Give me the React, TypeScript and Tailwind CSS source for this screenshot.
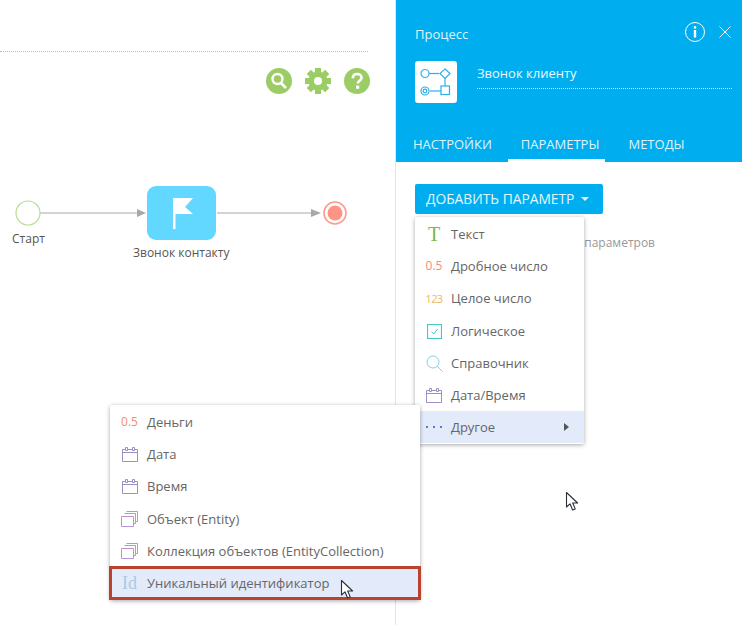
import React from "react";

const Cursor = ({ className }: { className: string }) => (
  <svg className={className} width="15" height="21" viewBox="0 0 15 21">
    <path d="M1.5 1.5V16L5 12.8L7.6 19L10.2 17.9L7.7 12H12.6Z" fill="#fff" stroke="#2a2f3a" strokeWidth="1.1" strokeLinejoin="round" />
  </svg>
);

const Calendar = () => (
  <svg width="16" height="16" viewBox="0 0 16 16" fill="none" stroke="#9a90c4" strokeWidth="1">
    <path d="M.5 3.5H15.5V15.5H.5Z M.5 6.5H15.5" />
    <path d="M3.5 1.5H5.5V4.5H3.5Z M10.5 1.5H12.5V4.5H10.5Z" fill="#fff" />
  </svg>
);

const Stack = () => (
  <svg width="17" height="16" viewBox="0 0 17 16" fill="none" stroke="#bb93d2" strokeWidth="1">
    <path d="M5.5.5H16.5V10.5H14.5" />
    <path d="M3.5 2.5H14.5V12.5H12.5" fill="#fff" />
    <path d="M.5 5.5H12.5V15.5H.5Z" fill="#fff" />
  </svg>
);

const Row = ({ icon, label, active, arrow, wide, shift }: { icon: React.ReactNode; label: string; active?: boolean; arrow?: boolean; wide?: boolean; shift?: boolean }) => (
  <div className={`flex h-[32px] items-center ${active ? "bg-[#e3eafa]" : ""} ${shift ? "mt-[1px]" : ""}`}>
    <div className={`flex shrink-0 justify-center pl-[2px] ${wide ? "w-[37px]" : "w-[36px]"}`}>{icon}</div>
    <span className="text-[13px] leading-none text-[#666]">{label}</span>
    {arrow && <span className="ml-auto mr-[15px] h-0 w-0 border-y-[4px] border-l-[5px] border-y-transparent border-l-[#555]" />}
  </div>
);

const Half = () => <span className="text-[12px] leading-none text-[#f78a74]">0.5</span>;

export default function App() {
  return (
    <div className="relative flex h-[625px] w-[742px] overflow-hidden bg-white text-[13px] text-[#666]" style={{ fontFamily: '"Open Sans", sans-serif' }}>
      {/* Canvas */}
      <div className="relative h-full w-[396px] border-r border-[#e4e4e4]">
        <div className="mt-[51px] w-[368px] border-t border-dotted border-[#bbb]" />
        <div className="mr-[25px] mt-[16px] flex justify-end gap-[13px]">
          <svg width="26" height="26" viewBox="0 0 26 26">
            <circle cx="13" cy="13" r="13" fill="#9ccc65" />
            <circle cx="11.5" cy="11" r="5" fill="none" stroke="#fff" strokeWidth="2.4" />
            <path d="M15 15L20 20" stroke="#fff" strokeWidth="2.6" />
          </svg>
          <svg width="26" height="26" viewBox="0 0 26 26">
            <g fill="#9ccc65">
              <circle cx="13" cy="13" r="9.5" />
              <rect x="10" y="0" width="6" height="26" />
              <rect x="10" y="0" width="6" height="26" transform="rotate(45 13 13)" />
              <rect x="10" y="0" width="6" height="26" transform="rotate(90 13 13)" />
              <rect x="10" y="0" width="6" height="26" transform="rotate(135 13 13)" />
            </g>
            <circle cx="13" cy="13" r="4" fill="#fff" />
          </svg>
          <svg width="26" height="26" viewBox="0 0 26 26">
            <circle cx="13" cy="13" r="13" fill="#9ccc65" />
            <path d="M8.8 10.2C8.8 7.6 10.6 6 13.2 6C15.7 6 17.5 7.5 17.5 9.7C17.5 12.6 13.7 12.8 13.7 15.6" fill="none" stroke="#fff" strokeWidth="2.6" />
            <rect x="12" y="17.6" width="3.2" height="3.2" fill="#fff" />
          </svg>
        </div>

        {/* Diagram */}
        <svg className="absolute left-0 top-[170px]" width="360" height="70" viewBox="0 0 360 70">
          <path d="M40 43H137M217 43H314" stroke="#a8a8a8" strokeWidth="1" />
          <path d="M137 39L146 43L137 47ZM311 39L321 43L311 47Z" fill="#a8a8a8" />
          <circle cx="28" cy="43" r="12" fill="#fff" stroke="#b9dc97" strokeWidth="1.2" />
          <circle cx="335" cy="43" r="11" fill="#fff" stroke="#ff9a8c" strokeWidth="1.6" />
          <circle cx="335" cy="43" r="7.5" fill="#ff9486" />
        </svg>
        <div className="absolute left-[147px] top-[186px] flex h-[54px] w-[69px] items-center justify-center rounded-[9px] bg-[#62d7ff] pl-[3px]">
          <svg width="20" height="31" viewBox="0 0 20 31">
            <path d="M0 0H20L12 9L20 16H2.5V31H0Z" fill="#fff" />
          </svg>
        </div>
        <div className="absolute left-[12px] top-[232px] text-[12px] leading-[14px] text-[#555]">Старт</div>
        <div className="absolute left-[133px] top-[246px] text-[12px] leading-[14px] text-[#555]">Звонок контакту</div>
      </div>

      {/* Panel */}
      <div className="flex-1">
        <div className="flex h-[162px] flex-col bg-[#00aeef] pt-[21px] text-white">
          <div className="flex items-center pl-[19px] pr-[11px]">
            <div className="mt-[4px] text-[13px] leading-[18px] text-[#dff4fd]">Процесс</div>
            <svg className="ml-auto" width="22" height="22" viewBox="0 0 22 22">
              <circle cx="11" cy="11" r="9.5" fill="none" stroke="#fff" strokeWidth="1" />
              <rect x="9.8" y="5.2" width="2.4" height="2.4" fill="#fff" />
              <rect x="9.8" y="9" width="2.4" height="7.5" fill="#fff" />
            </svg>
            <svg className="ml-[13px]" width="12" height="12" viewBox="0 0 12 12">
              <path d="M.5.5L11.5 11.5M11.5.5L.5 11.5" stroke="#fff" strokeWidth="1" />
            </svg>
          </div>
          <div className="mt-[18px] flex items-start gap-[20px] pl-[19px] pr-[10px]">
            <div className="flex h-[42px] w-[42px] shrink-0 items-center justify-center rounded-[3px] bg-white">
              <svg width="32" height="28" viewBox="0 0 32 28" fill="none" stroke="#2ab1ea" strokeWidth="1.2">
                <circle cx="5" cy="5.5" r="4" />
                <path d="M9 5.5H19" />
                <path d="M25 1L30 5.5L25 10.5L20 5.5Z" />
                <path d="M25 10.5V18" />
                <rect x="21" y="18" width="8.5" height="8.5" />
                <path d="M21 23H10" />
                <circle cx="5" cy="23" r="4" />
                <circle cx="5" cy="23" r="1.8" />
              </svg>
            </div>
            <div className="mt-[3px] flex-1 border-b border-dotted border-[#d8f2fc] pb-[6px] text-[13px] leading-[18px] text-[#e8f8fe]">
              Звонок клиенту
            </div>
          </div>
          <div className="mt-auto flex pl-[17px] text-[13px] leading-[19px] text-[#dff4fd]">
            <div className="pb-[8px]">НАСТРОЙКИ</div>
            <div className="ml-[16px] border-b-[3px] border-white pb-[5px] pl-[13px] pr-[6px]">ПАРАМЕТРЫ</div>
            <div className="ml-[23px] pb-[8px]">МЕТОДЫ</div>
          </div>
        </div>
        <div className="relative px-[19px] pt-[22px]">
          <div className="flex h-[30px] w-[188px] items-center rounded-[2px] bg-[#00aeef] pl-[11px] text-[13.8px] text-[#e6f7fe]">
            ДОБАВИТЬ ПАРАМЕТР
            <span className="ml-[7px] h-0 w-0 border-x-[4px] border-t-[4px] border-x-transparent border-t-[#e6f7fe]" />
          </div>
          <div className="absolute right-[87px] top-[73px] text-[12px] leading-[16px] text-[#999]">Нет параметров</div>
          <Cursor className="absolute left-[169px] top-[329px]" />
        </div>
      </div>

      {/* Main dropdown */}
      <div className="absolute left-[415px] top-[217px] w-[169px] rounded-[2px] bg-white pb-[1px] pt-[1px] shadow-[0_1px_4px_rgba(0,0,0,0.35)]">
        <Row icon={<span className="text-[20px] leading-none text-[#7ab648]" style={{ fontFamily: '"Liberation Serif", serif' }}>T</span>} label="Текст" />
        <Row icon={<Half />} label="Дробное число" />
        <Row icon={<span className="text-[11px] leading-none tracking-[-0.7px] text-[#f0b860]">123</span>} label="Целое число" />
        <Row
          shift
          icon={
            <svg width="15" height="15" viewBox="0 0 15 15" fill="none">
              <rect x=".5" y=".5" width="14" height="14" stroke="#45c8c8" strokeWidth="1.2" />
              <path d="M4.5 7.5L6.8 10L10.5 5" stroke="#45c8c8" />
            </svg>
          }
          label="Логическое"
        />
        <Row
          icon={
            <svg width="17" height="17" viewBox="0 0 17 17" fill="none" stroke="#84cdf0" strokeWidth="1">
              <circle cx="7" cy="7" r="6" />
              <path d="M11.5 11.5L16.5 16.5" />
            </svg>
          }
          label="Справочник"
        />
        <Row icon={<Calendar />} label="Дата/Время" />
        <Row
          icon={
            <span className="flex gap-[5px]">
              <i className="h-[2px] w-[2px] bg-[#5a78d8]" />
              <i className="h-[2px] w-[2px] bg-[#5a78d8]" />
              <i className="h-[2px] w-[2px] bg-[#5a78d8]" />
            </span>
          }
          label="Другое"
          active
          arrow
        />
      </div>

      {/* Sub dropdown */}
      <div className="absolute left-[110px] top-[405px] w-[310px] rounded-[2px] bg-white pb-[1px] pt-[1px] shadow-[0_1px_4px_rgba(0,0,0,0.35)]">
        <Row wide icon={<Half />} label="Деньги" />
        <Row wide icon={<Calendar />} label="Дата" />
        <Row wide icon={<Calendar />} label="Время" />
        <Row wide shift icon={<Stack />} label="Объект (Entity)" />
        <Row wide icon={<Stack />} label="Коллекция объектов (EntityCollection)" />
        <Row wide icon={<span className="text-[18px] leading-none text-[#a9cbe3]" style={{ fontFamily: '"Liberation Serif", serif' }}>Id</span>} label="Уникальный идентификатор" active />
      </div>
      <div className="absolute left-[109px] top-[566px] h-[34px] w-[312px] border-[3px] border-[#b9432e]" />
      <Cursor className="absolute left-[340px] top-[579px]" />
    </div>
  );
}
